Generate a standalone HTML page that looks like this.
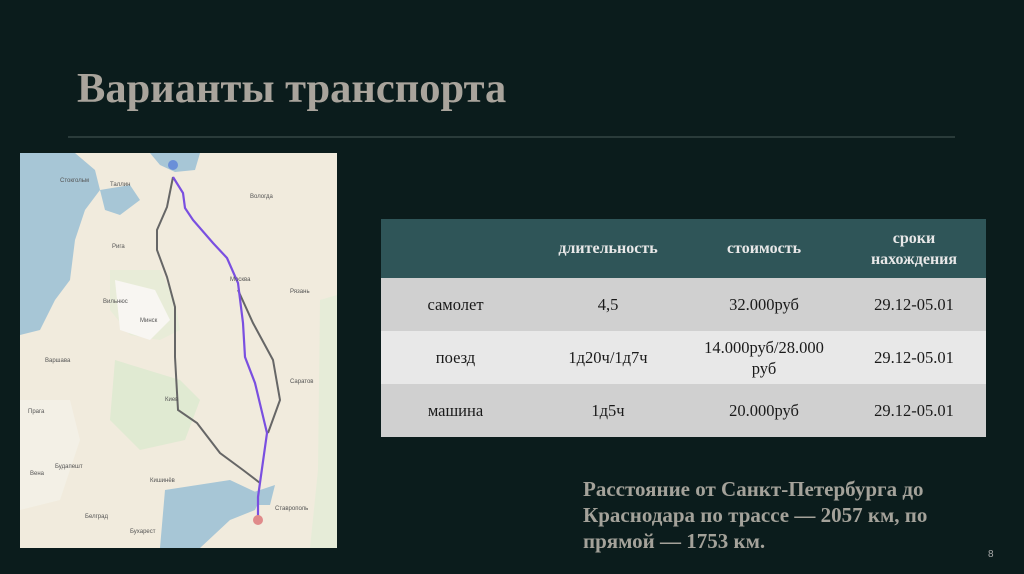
<!DOCTYPE html>
<html><head><meta charset="utf-8"><style>
body{margin:0;width:1024px;height:574px;background:#0b1c1c;position:relative;overflow:hidden;font-family:"Liberation Serif",serif}
.t{position:absolute;left:77px;top:64px;font-size:42.5px;font-weight:bold;color:#a9a49c;white-space:nowrap}
.ln{position:absolute;left:68px;top:136px;width:887px;height:2px;background:#2a3b3a}
table{position:absolute;left:381px;top:219px;width:605px;border-collapse:collapse;font-size:16.5px;color:#1a1a1a}
td{text-align:center;padding:0;line-height:21px}
tr.h td{background:#2f5558;color:#e8e8e8;font-weight:bold;font-size:16px;height:59px}
tr.a td{background:#d0d0d0;height:53px}
tr.b td{background:#e8e8e8;height:53px}
.bt{position:absolute;left:583px;top:476px;font-size:21px;font-weight:bold;color:#a4a29a;line-height:26px;white-space:nowrap}
.pn{position:absolute;left:988px;top:549px;font-size:10px;color:#aaa;font-family:"Liberation Sans",sans-serif}
</style></head><body>
<div class="t">Варианты транспорта</div>
<div class="ln"></div>
<svg style="position:absolute;left:20px;top:153px" width="317" height="395" viewBox="20 153 317 395">
<rect x="20" y="153" width="317" height="395" fill="#f1ebdd"/>
<path d="M20 153 L75 153 L95 170 L100 190 L85 210 L75 240 L70 280 L55 300 L40 330 L20 335 Z" fill="#a7c6d6"/>
<path d="M100 190 L130 185 L140 200 L120 215 L105 210 Z" fill="#a7c6d6"/>
<path d="M150 153 L200 153 L195 170 L175 172 L160 165 Z" fill="#a7c6d6"/>
<path d="M110 270 L160 270 L175 300 L180 330 L160 340 L130 335 L110 310 Z" fill="#e8ecd8"/>
<path d="M115 280 L155 290 L170 320 L150 340 L120 330 Z" fill="#f8f6f2"/>
<path d="M115 360 L180 380 L200 400 L185 440 L140 450 L110 420 Z" fill="#e0ead2"/>
<path d="M20 400 L70 400 L80 440 L60 500 L20 510 Z" fill="#f3f0e6"/>
<path d="M165 490 L230 480 L262 495 L255 510 L230 520 L200 548 L160 548 Z" fill="#a7c6d6"/>
<path d="M245 495 L275 485 L270 505 L255 505 Z" fill="#a7c6d6"/>
<path d="M320 300 L337 295 L337 548 L310 548 L318 470 Z" fill="#e6ecd8"/>
<path d="M173 177 L167 207 L157 230 L157 250 L167 277 L175 307 L175 357 L178 410 L197 423 L220 453 L243 470 L260 483" stroke="#666" stroke-width="2" fill="none"/>
<path d="M238 290 L253 323 L273 360 L280 400 L268 433" stroke="#666" stroke-width="2" fill="none"/>
<path d="M173 177 L183 193 L185 208 L193 220 L213 243 L227 258 L238 283 L243 323 L245 357 L255 383 L267 433 L258 497 L258 517" stroke="#7a4fe0" stroke-width="2.2" fill="none"/>
<circle cx="173" cy="165" r="5" fill="#6a8fd8"/>
<circle cx="258" cy="520" r="5" fill="#e08a8a"/>
<g font-family="Liberation Sans" font-size="6" fill="#555">
<text x="60" y="182">Стокгольм</text><text x="110" y="186">Таллин</text><text x="112" y="248">Рига</text>
<text x="103" y="303">Вильнюс</text><text x="140" y="322">Минск</text><text x="45" y="362">Варшава</text>
<text x="230" y="281">Москва</text><text x="250" y="198">Вологда</text><text x="165" y="401">Киев</text>
<text x="28" y="413">Прага</text><text x="55" y="468">Будапешт</text><text x="30" y="475">Вена</text>
<text x="150" y="482">Кишинёв</text><text x="130" y="533">Бухарест</text><text x="85" y="518">Белград</text>
<text x="275" y="510">Ставрополь</text><text x="290" y="383">Саратов</text><text x="290" y="293">Рязань</text>
</g>
</svg>
<table>
<tr class="h"><td style="width:149px"></td><td style="width:156px">длительность</td><td style="width:156px">стоимость</td><td>сроки<br>нахождения</td></tr>
<tr class="a"><td>самолет</td><td>4,5</td><td>32.000руб</td><td>29.12-05.01</td></tr>
<tr class="b"><td>поезд</td><td>1д20ч/1д7ч</td><td>14.000руб/28.000<br>руб</td><td>29.12-05.01</td></tr>
<tr class="a"><td>машина</td><td>1д5ч</td><td>20.000руб</td><td>29.12-05.01</td></tr>
</table>
<div class="bt">Расстояние от Санкт-Петербурга до<br>Краснодара по трассе — 2057 км, по<br>прямой — 1753 км.</div>
<div class="pn">8</div>
</body></html>
